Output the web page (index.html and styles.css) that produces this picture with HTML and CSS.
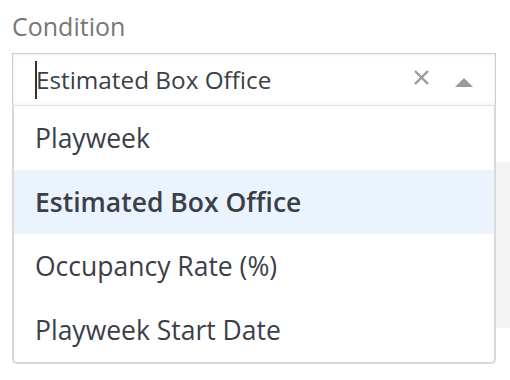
FILE: index.html
```html
<!DOCTYPE html>
<html lang="en">
<head>
    <meta charset="UTF-8">
    <title>Condition select</title>
    <link rel="stylesheet" href="styles.css">
</head>
<body>
    <div class="backdrop"></div>
    <div class="field">
        <label class="field-label">Condition</label>
        <div class="select">
            <div class="select-control">
                <div class="select-value"><span class="caret"></span>Estimated Box Office</div>
                <svg class="select-clear" width="17" height="17" viewBox="0 0 17 17">
                    <path d="M2 2 L15 15 M15 2 L2 15" stroke="#999" stroke-width="2.4" fill="none"/>
                </svg>
                <svg class="select-arrow" width="18" height="9" viewBox="0 0 18 9">
                    <path d="M0 9 L9 0 L18 9 Z" fill="#999"/>
                </svg>
            </div>
            <div class="select-menu">
                <div class="select-option">Playweek</div>
                <div class="select-option is-selected">Estimated Box Office</div>
                <div class="select-option">Occupancy Rate (%)</div>
                <div class="select-option">Playweek Start Date</div>
            </div>
        </div>
    </div>
</body>
</html>
```

FILE: styles.css
```css
* {
    margin: 0;
    padding: 0;
    box-sizing: border-box;
}

body {
    font-family: 'Open Sans', 'Noto Sans', sans-serif;
    background-color: #ffffff;
    color: #3b4048;
    padding: 11px 14px 0 12px;
    position: relative;
    width: 510px;
    height: 380px;
    overflow: hidden;
}

/* something grey sitting behind the open menu */
.backdrop {
    position: absolute;
    left: 496px;
    top: 162px;
    width: 20px;
    height: 166px;
    background-color: #f4f4f4;
}

.field-label {
    display: block;
    font-size: 25px;
    color: #767676;
    line-height: 30px;
    margin-bottom: 12px;
}

.select {
    position: relative;
    width: 484px;
}

.select-control {
    display: flex;
    align-items: center;
    height: 53px;
    border: 1px solid #ccc;
    border-bottom-color: #e3e3e3;
    background-color: #fff;
    box-shadow: inset 0 0 4px rgba(0,0,0,0.08);
    padding: 0 22px 0 22px;
}

.select-value {
    flex: 1;
    display: flex;
    align-items: center;
    font-size: 24.3px;
    color: #3b4048;
}

.caret {
    display: inline-block;
    width: 2px;
    height: 38px;
    background-color: #333;
    margin-right: -1px;
}

.select-clear {
    display: block;
    margin-right: 25px;
    margin-top: -4px;
}

.select-arrow {
    display: block;
    margin-top: 6px;
}

.select-menu {
    border: 2px solid #d9d9dc;
    border-top: 0;
    border-radius: 0 0 5px 5px;
    background-color: #fff;
    overflow: hidden;
}

.select-option {
    height: 64px;
    line-height: 64px;
    padding-left: 21px;
    font-size: 26.5px;
    color: #3b4048;
}

.select-option.is-selected {
    background-color: #ebf4fe;
    font-weight: 600;
}
```
